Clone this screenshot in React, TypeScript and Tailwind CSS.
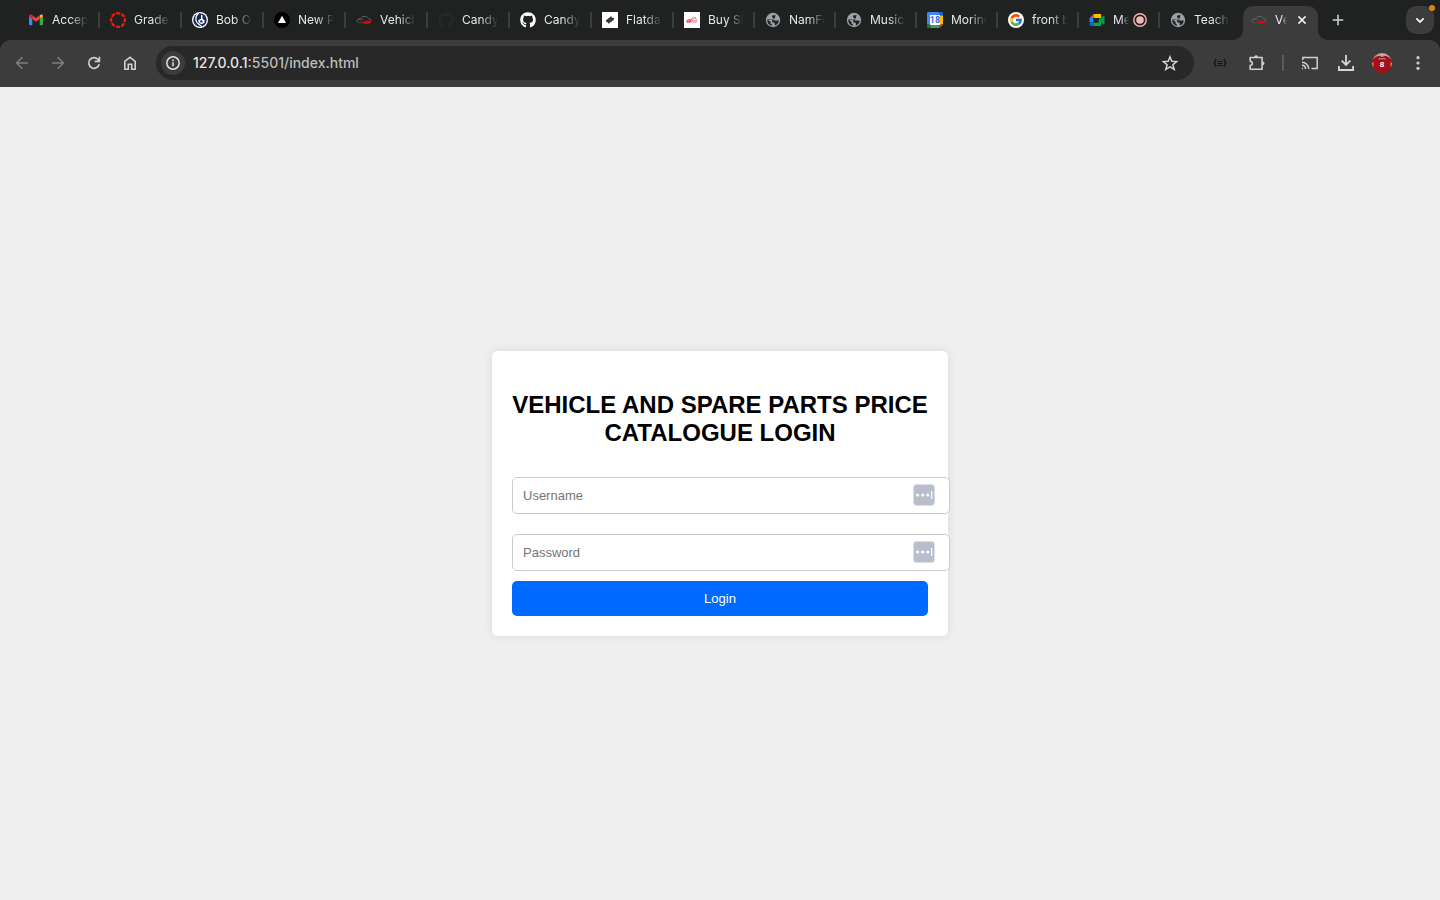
import type { ReactNode } from "react";
import { FaGithub } from "react-icons/fa";
import { FcGoogle } from "react-icons/fc";

function GmailIcon() {
  return (
    <svg viewBox="0 0 16 16" className="size-4">
      <path d="M1 4.500V12.300c0 .6.5 1 1 1h2.300V7L1 4.500z" fill="#4285f4" />
      <path d="M11.700 13.300H14c.6 0 1-.4 1-1V4.500L11.700 7v6.300z" fill="#34a853" />
      <path d="M11.700 3.400V7L15 4.600V4c0-1.400-1.500-2-2.500-1.200l-.8.6z" fill="#fbbc04" />
      <path d="M4.300 7V3.300L8 6.100l3.700-2.800V7L8 9.800 4.300 7z" fill="#ea4335" />
      <path d="M1 4v.6L4.300 7V3.400l-.8-.6C2.500 2 1 2.700 1 4z" fill="#e0261c" />
    </svg>
  );
}

function CanvasIcon() {
  return (
    <svg viewBox="0 0 16 16" className="size-4">
      <circle cx="8" cy="8" r="6.900" fill="none" stroke="#f21d0b" strokeWidth="2.200" strokeDasharray="4.200 1.219" strokeDashoffset="2.100" />
    </svg>
  );
}

function BobIcon() {
  return (
    <svg viewBox="0 0 16 16" className="size-4">
      <circle cx="8" cy="8" r="8" fill="#fff" />
      <circle cx="8" cy="8" r="6.700" fill="#16275a" />
      <path d="M6.800 1.200C3 3.800 2.800 9.500 6.500 12l3.300 2.600" fill="none" stroke="#fff" strokeWidth="1.200" />
      <path d="M9 2.500v4.300L6.200 8.300l.6 2.800 2.900 1.200 2.700-1.500.3-2.600-2.200-1.300V3.500z" fill="#fff" />
      <circle cx="9.300" cy="9.400" r="1.200" fill="#16275a" />
    </svg>
  );
}

function VercelIcon() {
  return (
    <svg viewBox="0 0 16 16" className="size-4">
      <circle cx="8" cy="8" r="8" fill="#000" />
      <path d="M8 3.800l4 7.200H4z" fill="#fff" />
    </svg>
  );
}

function CarIcon() {
  return (
    <svg viewBox="0 0 16 16" className="size-4">
      <path d="M2 10.300C.8 9.800.7 8.200 1.800 7.400l2.700-.9C5.700 4.800 7.400 4.200 9.600 4.500c1.500.2 2.300 1.200 3.200 2.200 1.800.4 2.200 1 2.200 2.300" fill="none" stroke="#656767" strokeWidth="1" />
      <path d="M3 7.600h4.500M2.500 10.700h4" stroke="#555757" strokeWidth=".8" />
      <path d="M6.300 9.700c1.500-.7 2-.8 3-.8 2-.1 3.700-.1 5.600.1v1.700c-.4.800-1.100 1.100-2 .9-1.500.4-3.500.4-4.700.1-.9 0-1.600-.8-1.900-2z" fill="#dc0606" />
    </svg>
  );
}

function FlatdangoIcon() {
  return (
    <svg viewBox="0 0 16 16" className="size-4">
      <path d="M0 0h16v16H0z" fill="#fff" />
      <path d="M3.900 8.600l5.400-4.500.5 1.600 2.400.4-.6 1.800-5 3.900-.8-1.500-1.500-.2z" fill="#333" />
      <path d="M6.500 8.700l3-2.200" stroke="#555" strokeWidth=".6" />
    </svg>
  );
}

function BuyIcon() {
  return (
    <svg viewBox="0 0 16 16" className="size-4">
      <path d="M0 0h16v16H0z" fill="#fff" />
      <path d="M2.500 10.200c.5-2 2-2.500 3.500-2.200L5.500 10.200H3M7.500 7c-1.200.8-1.200 2.500 0 3.300" fill="none" stroke="#ef4858" strokeWidth="1.300" />
      <circle cx="10.500" cy="8.500" r="2" fill="none" stroke="#f2a3a9" strokeWidth="1.100" />
      <path d="M7.500 6.500c1-1.300 3-1.500 4.500-.4M8 8.800h5" fill="none" stroke="#ea7b84" strokeWidth=".9" />
    </svg>
  );
}

function GlobeIcon() {
  return (
    <svg viewBox="0 0 16 16" className="size-4">
      <circle cx="8" cy="8" r="7.200" fill="#9aa0a6" />
      <path
        d="M10.700 3.200H8.500c-1 0-1.500.6-1.500 1.400 0 .9.600 1.300 1.500 1.300v1.700c0 .7.400 1 1.100 1h4.200a5.900 5.900 0 0 1-4 5v-1.900c0-.8-.5-1.200-1.300-1.200H7.300V9.200c0-.9-.6-1.400-1.500-1.400H2.300c-.2 3.100 1.800 5.500 4.700 6v-1.400c-.9 0-1.400-.6-1.400-1.400v-.9L2.400 7.200c.2 0 3.900-.2 4.700.4l1.700.6"
        fill="#202221"
      />
    </svg>
  );
}

function CalendarIcon() {
  return (
    <svg viewBox="0 0 16 16" className="size-4">
      <path d="M1.500 0h11v3.500h-9v9H0v-11C0 .7.700 0 1.500 0z" fill="#4285f4" />
      <path d="M12.500 0h2c.9 0 1.500.7 1.500 1.500v2h-3.500z" fill="#1967d2" />
      <path d="M12.500 3.500H16v9h-3.500z" fill="#fbbc04" />
      <path d="M3.500 12.500h9V16h-9z" fill="#34a853" />
      <path d="M0 12.500h3.500V16h-2C.7 16 0 15.300 0 14.500z" fill="#188038" />
      <path d="M12.500 12.500H16L12.500 16z" fill="#ea4335" />
      <path d="M3 3h10v10H3z" fill="#fff" />
      <text x="8" y="11.200" textAnchor="middle" fontFamily="Roboto, sans-serif" fontSize="9" fontWeight="700" fill="#2a6ee0">18</text>
    </svg>
  );
}

function SearchGoogleIcon() {
  return (
    <span className="flex size-4 items-center justify-center rounded-full bg-white">
      <FcGoogle className="size-3.5" />
    </span>
  );
}

function MeetIcon() {
  return (
    <svg viewBox="0 0 16 16" className="size-4">
      <path d="M4.500 2v4H.5z" fill="#ea4335" />
      <path d="M4.500 2H11c.7 0 1.200.4 1.200 1.100V6H4.500z" fill="#fbbc04" />
      <path d="M.5 6h4v4.500h-4z" fill="#2684fc" />
      <path d="M.5 10.500h4V14H1.700C1 14 .5 13.500.5 12.800z" fill="#0066da" />
      <path d="M4.500 10.500h5V8l2.700-2.500v7.300c0 .7-.5 1.200-1.200 1.200H4.500z" fill="#00ac47" />
      <path d="M9.500 8l4.800-4.100c.5-.4 1.200-.1 1.200.5v7.300c0 .6-.7.900-1.200.5z" fill="#00a040" />
      <path d="M4.500 6h5v4.500h-5z" fill="#202221" />
    </svg>
  );
}

type Tab = { title: string; icon: ReactNode; width: string; recording?: boolean };

const tabs: Tab[] = [
  { title: "Accep", icon: <GmailIcon />, width: "w-[82px]" },
  { title: "Grade", icon: <CanvasIcon />, width: "w-[82px]" },
  { title: "Bob O", icon: <BobIcon />, width: "w-[82px]" },
  { title: "New P", icon: <VercelIcon />, width: "w-[82px]" },
  { title: "Vehicl", icon: <CarIcon />, width: "w-[82px]" },
  { title: "Candy", icon: <FaGithub className="size-4 text-[#24292f]" />, width: "w-[82px]" },
  { title: "Candy", icon: <FaGithub className="size-4 text-white" />, width: "w-[82px]" },
  { title: "Flatda", icon: <FlatdangoIcon />, width: "w-[82px]" },
  { title: "Buy Si", icon: <BuyIcon />, width: "w-[81px]" },
  { title: "NamFo", icon: <GlobeIcon />, width: "w-[81px]" },
  { title: "Music", icon: <GlobeIcon />, width: "w-[81px]" },
  { title: "Moring", icon: <CalendarIcon />, width: "w-[81px]" },
  { title: "front b", icon: <SearchGoogleIcon />, width: "w-[81px]" },
  { title: "Me", icon: <MeetIcon />, width: "w-[81px]", recording: true },
  { title: "Teach", icon: <GlobeIcon />, width: "w-[81px]" },
];

function TabItem({ tab, last }: { tab: Tab; last: boolean }) {
  return (
    <button
      type="button"
      className={`flex h-10 items-center pl-2.5 text-left text-[#e6e8e7] ${tab.width}`}
    >
      <span className="shrink-0">{tab.icon}</span>
      <span
        className={`ml-2 whitespace-nowrap mask-r-from-50% mask-r-to-100% ${tab.recording ? "w-4" : "w-9"}`}
      >
        {tab.title}
      </span>
      {tab.recording && (
        <svg viewBox="0 0 14 14" className="ml-1 size-3.5 shrink-0">
          <circle cx="7" cy="7" r="6.200" fill="none" stroke="#f5b5b0" strokeWidth="1.400" />
          <circle cx="7" cy="7" r="3.800" fill="#f5b5b0" />
        </svg>
      )}
      {!last && <span className="ml-auto h-4 w-0.5 shrink-0 bg-[#3c3e3d]" />}
    </button>
  );
}

function TabStrip() {
  return (
    <div className="flex h-10 items-center bg-[#202221] pr-1.5 pl-[18px] text-xs">
      {tabs.map((tab, i) => (
        <TabItem key={i} tab={tab} last={i === tabs.length - 1} />
      ))}
      <div className="relative ml-0.5 flex h-[34px] w-[75px] shrink-0 items-center self-end rounded-t-[10px] bg-[#3c3c3c] pb-1.5 pl-2 text-[#f0f0f0]">
        <svg viewBox="0 0 10 10" className="absolute bottom-0 -left-2.5 size-2.5">
          <path d="M10 0v10H0A10 10 0 0 0 10 0z" fill="#3c3c3c" />
        </svg>
        <svg viewBox="0 0 10 10" className="absolute -right-2.5 bottom-0 size-2.5">
          <path d="M0 0v10h10A10 10 0 0 1 0 0z" fill="#3c3c3c" />
        </svg>
        <CarIcon />
        <span className="ml-2 w-3 whitespace-nowrap mask-r-from-50% mask-r-to-100%">Ve</span>
        <button type="button" aria-label="Close tab" className="ml-[7px] flex size-4 items-center justify-center">
          <svg viewBox="0 0 16 16" className="size-4">
            <path d="M4.400 4.400l7.200 7.200M11.600 4.400l-7.200 7.200" stroke="#f0f0f0" strokeWidth="1.500" />
          </svg>
        </button>
      </div>
      <button type="button" aria-label="New tab" className="ml-3 flex size-4 shrink-0 items-center justify-center">
        <svg viewBox="0 0 16 16" className="size-4">
          <path d="M8 2.700v10.600M2.700 8h10.600" stroke="#cfd1d0" strokeWidth="1.600" />
        </svg>
      </button>
      <button
        type="button"
        aria-label="Search tabs"
        className="relative ml-auto flex size-7 shrink-0 items-center justify-center rounded-[10px] bg-[#3c3c3c]"
      >
        <svg viewBox="0 0 16 16" className="size-4">
          <path d="M4.300 6.300L8 10l3.700-3.700" fill="none" stroke="#f0f0f0" strokeWidth="1.800" />
        </svg>
        <span className="absolute -top-px -right-px size-1.5 rounded-full bg-[#e08509]" />
      </button>
    </div>
  );
}

function IconButton({ label, children }: { label: string; children: ReactNode }) {
  return (
    <button type="button" aria-label={label} className="flex size-5 shrink-0 items-center justify-center">
      {children}
    </button>
  );
}

function Toolbar() {
  return (
    <div className="bg-[#202221]">
      <div className="flex h-[47px] items-center rounded-t-[10px] bg-[#3c3c3c] px-3 pb-px">
        <div className="flex items-center gap-4">
          <IconButton label="Back">
            <svg viewBox="0 0 20 20" className="size-5" fill="none" stroke="#7d7d7d" strokeWidth="1.600">
              <path d="M16 10H5M10.300 4.300L4.600 10l5.700 5.700" />
            </svg>
          </IconButton>
          <IconButton label="Forward">
            <svg viewBox="0 0 20 20" className="size-5" fill="none" stroke="#7d7d7d" strokeWidth="1.600">
              <path d="M4 10h11M9.700 4.300l5.700 5.700-5.700 5.700" />
            </svg>
          </IconButton>
          <IconButton label="Reload">
            <svg viewBox="0 0 20 20" className="size-5" fill="none" stroke="#cfcfcf" strokeWidth="1.700">
              <path d="M15.200 11.200A5.300 5.300 0 1 1 14.300 6.800L15.400 8M15.400 3.700v4.700h-4.700" />
            </svg>
          </IconButton>
          <IconButton label="Home">
            <svg viewBox="0 0 20 20" className="size-5" fill="none" stroke="#cfcfcf" strokeWidth="1.600">
              <path d="M4.800 8.300L10 4.300l5.200 4v7.900h-3.500v-5H8.300v5H4.800z" />
            </svg>
          </IconButton>
        </div>
        <div className="ml-4 flex h-[34px] flex-1 items-center rounded-full bg-[#282828] pr-4 pl-[5px]">
          <button
            type="button"
            aria-label="Site information"
            className="flex size-6 shrink-0 items-center justify-center rounded-full bg-[#3c3c3c]"
          >
            <svg viewBox="0 0 16 16" className="size-4">
              <circle cx="8" cy="8" r="6.200" fill="none" stroke="#e3e3e3" strokeWidth="1.500" />
              <path d="M8 7.300v4M8 4.600v1.600" stroke="#e3e3e3" strokeWidth="1.500" />
            </svg>
          </button>
          <span className="ml-2 flex-1 text-sm font-medium text-[#bdbdbd]">
            <span className="text-[#e6e6e6]">127.0.0.1</span>:5501/index.html
          </span>
          <button type="button" aria-label="Bookmark this page" className="flex size-4 items-center justify-center">
            <svg viewBox="0 0 16 16" className="size-4">
              <path d="M8 1.800l1.800 4.500 4.900.3-3.800 3.100 1.300 4.700L8 11.800l-4.200 2.600 1.300-4.700-3.800-3.100 4.900-.3z" fill="none" stroke="#d3d3d3" strokeWidth="1.500" />
            </svg>
          </button>
        </div>
        <div className="ml-4 flex items-center">
          <IconButton label="JSON viewer">
            <svg viewBox="0 0 20 20" className="size-5" fill="none" stroke="#101010" strokeWidth="1.200">
              <path d="M6.500 6.600c-1.300 0-1.500.4-1.500 1.300v.9c0 .8-.4 1.200-1.300 1.200.9 0 1.300.4 1.300 1.200v.9c0 .9.200 1.300 1.500 1.300M13.500 6.600c1.300 0 1.500.4 1.500 1.300v.9c0 .8.4 1.200 1.300 1.200-.9 0-1.300.4-1.300 1.200v.9c0 .9-.2 1.300-1.500 1.300" />
              <path d="M7.500 8.500h5M7.500 10.500h5M7.500 12.500h5" strokeWidth=".9" />
            </svg>
          </IconButton>
          <span className="ml-4 flex">
            <IconButton label="Extensions">
              <svg viewBox="0 0 20 20" className="size-5" fill="#d0d0d0">
                <path
                  d="M4.200 4.500h11.900v11.700H4.200v-3.700c2.900-.4 2.900-3.900 0-4.300z"
                  fill="none"
                  stroke="#d0d0d0"
                  strokeWidth="1.600"
                  strokeLinejoin="round"
                />
                <path d="M8.200 4.200a1.900 1.900 0 0 1 3.800 0zM16.600 8.400a1.900 1.900 0 0 1 0 3.800z" />
              </svg>
            </IconButton>
          </span>
          <span className="mx-4 h-4 w-0.5 bg-[#5c5c5c]" />
          <div className="flex items-center gap-4">
            <IconButton label="Cast">
              <svg viewBox="0 0 20 20" className="size-5" fill="none" stroke="#d0d0d0" strokeWidth="1.500">
                <path d="M2.800 7V4.500h14.400v11H11.500M2 15.500h1M2 12.300a3.700 3.700 0 0 1 3.500 3.700M2 9.300A6.700 6.700 0 0 1 8.700 16" />
              </svg>
            </IconButton>
            <IconButton label="Downloads">
              <svg viewBox="0 0 20 20" className="size-5" fill="none" stroke="#d6d6d6" strokeWidth="1.800">
                <path d="M10 2v9.500M5.700 7.700L10 12l4.300-4.300M2.900 13v4h14.200v-4" />
              </svg>
            </IconButton>
            <IconButton label="Profile">
              <svg viewBox="0 0 20 20" className="size-5">
                <clipPath id="avatar">
                  <circle cx="10" cy="10" r="10" />
                </clipPath>
                <g clipPath="url(#avatar)">
                  <path d="M0 0h20v20H0z" fill="#a80d1c" />
                  <path d="M0 0h20v7l-3.500-3L13 2.800 10 4 7 2.800 3.500 4 0 7z" fill="#b5a9a0" />
                  <path d="M0 9.500h1.500v4H0zM18.500 9.500H20v4h-1.500z" fill="#d49a42" />
                  <path d="M0 14h2.500v6H0zM17.500 14H20v6h-2.500z" fill="#4c3a36" />
                  <path d="M6.500 5.800h7" stroke="#d8a0a6" strokeWidth=".9" />
                  <text x="10" y="13.500" textAnchor="middle" fontFamily="Liberation Sans, sans-serif" fontSize="8" fontWeight="700" fill="#fff">8</text>
                </g>
              </svg>
            </IconButton>
            <IconButton label="Menu">
              <svg viewBox="0 0 20 20" className="size-5" fill="#d0d0d0">
                <circle cx="10" cy="4.700" r="1.600" />
                <circle cx="10" cy="10" r="1.600" />
                <circle cx="10" cy="15.300" r="1.600" />
              </svg>
            </IconButton>
          </div>
        </div>
      </div>
    </div>
  );
}

function Field({ label, type }: { label: string; type: string }) {
  return (
    <div className="relative w-[calc(100%+22px)]">
      <input
        type={type}
        aria-label={label}
        placeholder={label}
        className="block h-[37px] w-full rounded-[5px] border border-[#cccccc] bg-white px-2.5 text-[13px] text-black placeholder:text-[#757575]"
      />
      <svg viewBox="0 0 22 22" className="absolute top-[7px] right-[15px] size-[22px]">
        <rect x=".5" y=".5" width="21" height="21" rx="3" fill="#b8becb" stroke="#d9dde6" />
        <circle cx="4.600" cy="11" r="1.600" fill="#fff" />
        <circle cx="9.700" cy="11" r="1.600" fill="#fff" />
        <circle cx="14.800" cy="11" r="1.600" fill="#fff" />
        <path d="M18.700 7v8" stroke="#fff" strokeWidth="1.200" />
      </svg>
    </div>
  );
}

export default function App() {
  return (
    <div className="flex min-h-screen flex-col bg-[#efefef] font-['Inter',sans-serif]">
      <header>
        <TabStrip />
        <Toolbar />
      </header>
      <main className="flex flex-1 items-center justify-center font-['Liberation_Sans',Arial,sans-serif]">
        <form
          className="w-full max-w-[456px] rounded-[5px] bg-white p-5 shadow-[0_0_10px_rgba(0,0,0,0.1)]"
          onSubmit={(e) => e.preventDefault()}
        >
          <h2 className="mt-5 mb-[30px] text-center text-2xl leading-7 font-bold text-black">
            VEHICLE AND SPARE PARTS PRICE CATALOGUE LOGIN
          </h2>
          <div className="flex flex-col gap-5">
            <Field label="Username" type="text" />
            <Field label="Password" type="password" />
          </div>
          <button type="submit" className="mt-2.5 h-[35px] w-full rounded-[5px] bg-[#006aff] text-[13px] text-white">
            Login
          </button>
        </form>
      </main>
    </div>
  );
}
